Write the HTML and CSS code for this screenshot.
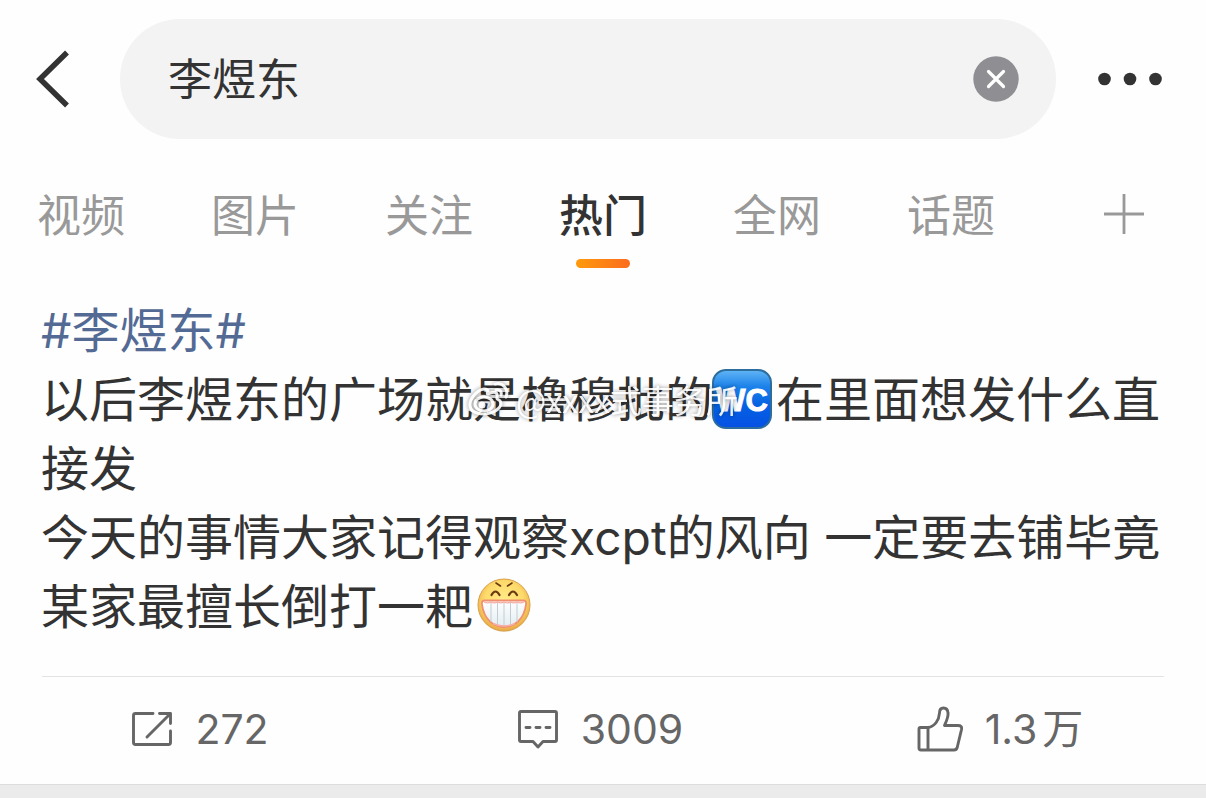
FILE: index.html
```
<!DOCTYPE html>
<html lang="zh-CN">
<head>
    <meta charset="UTF-8">
    <meta name="viewport" content="width=device-width, initial-scale=1.0">
    <title>李煜东 - 搜索</title>
    <link rel="stylesheet" href="styles.css">
</head>
<body>
    <header class="topbar">
        <button class="back" type="button" aria-label="返回">
            <svg width="34" height="58" viewBox="0 0 34 58"><path d="M31 2.5 4 29l27 26.5" fill="none" stroke="#333" stroke-width="5.5"/></svg>
        </button>
        <form class="search" role="search">
            <input class="search-input" type="text" aria-label="搜索" value="李煜东">
            <button class="clear" type="button" aria-label="清除">
                <svg width="46" height="46" viewBox="0 0 46 46"><circle cx="23" cy="23" r="22.7" fill="#8e8e93"/><path d="m15.5 15.5 15 15m0-15-15 15" stroke="#fff" stroke-width="3.2" stroke-linecap="round"/></svg>
            </button>
        </form>
        <button class="more" type="button" aria-label="更多">
            <svg width="64" height="14" viewBox="0 0 64 14" fill="#333"><circle cx="6.5" cy="7" r="6.3"/><circle cx="32" cy="7" r="6.3"/><circle cx="57.5" cy="7" r="6.3"/></svg>
        </button>
    </header>

    <nav class="tabs">
        <a class="tab" href="#">视频</a>
        <a class="tab" href="#">图片</a>
        <a class="tab" href="#">关注</a>
        <a class="tab active" href="#">热门</a>
        <a class="tab" href="#">全网</a>
        <a class="tab" href="#">话题</a>
        <button class="add" type="button" aria-label="添加">
            <svg width="40" height="40" viewBox="0 0 40 40"><path d="M20 0v40M0 20h40" stroke="#999" stroke-width="2.8"/></svg>
        </button>
    </nav>

    <article class="post">
        <div class="content">
            <p><a class="topic" href="#">#李煜东#</a></p>
            <p>以后李煜东的广场就是橹穆批的<svg class="emoji wc" viewBox="0 0 60 60" role="img" aria-label="WC">
                <defs>
                    <linearGradient id="wcFill" x1="0" y1="0" x2="0" y2="1"><stop offset="0" stop-color="#62b5f5"/><stop offset=".28" stop-color="#1d83ea"/><stop offset=".6" stop-color="#0562e2"/><stop offset="1" stop-color="#0650e4"/></linearGradient>
                </defs>
                <rect x="1" y="1" width="58" height="58" rx="13" fill="url(#wcFill)" stroke="#2d6d9e" stroke-width="2"/>
                <text class="wc-text" x="30" y="42" text-anchor="middle">WC</text>
            </svg>在里面想发什么直接发</p>
            <p>今天的事情大家记得观察xcpt的风向 一定要去铺毕竟某家最擅长倒打一耙<svg class="emoji grin" viewBox="0 0 56 56" role="img" aria-label="呲牙">
                <defs>
                    <radialGradient id="face" cx=".5" cy=".42" r=".58"><stop offset="0" stop-color="#ffec8a"/><stop offset=".65" stop-color="#fdda6a"/><stop offset="1" stop-color="#e9a845"/></radialGradient>
                    <linearGradient id="teeth" x1="0" y1="0" x2="0" y2="1"><stop offset="0" stop-color="#fff"/><stop offset="1" stop-color="#e3edf1"/></linearGradient>
                </defs>
                <ellipse cx="28" cy="30" rx="24" ry="25" fill="#d9c7a0" opacity=".5"/>
                <circle cx="28" cy="28" r="26" fill="url(#face)" stroke="#d9a04a" stroke-width="1"/>
                <path d="M20 6l4.500 3M36 6l-4.500 3" stroke="#6b3a12" stroke-width="1.600" stroke-linecap="round"/>
                <path d="M15.500 18q4-7 8 0M33 18q4-7 8 0" fill="none" stroke="#6b3a12" stroke-width="2.200" stroke-linecap="round"/>
                <path d="M8.500 23.500h39q3 0 2.500 4C48 42 39 50 28 50S8 42 6 27.500q-.5-4 2.500-4z" fill="url(#teeth)" stroke="#f08f70" stroke-width="1.800"/>
                <path d="M15 25v20M21.500 25v23M28 25v24M34.500 25v23M41 25v20" stroke="#c3ccd3" stroke-width="1"/>
                <path d="M8 25q3.500 1.800 7 0 3.300 1.800 6.500 0 3.300 1.800 6.500 0 3.300 1.800 6.500 0 3.300 1.800 6.500 0 3.500 1.800 7 0M17 46.500q11 5 22 0" fill="none" stroke="#f6aea6" stroke-width="1.400"/>
            </svg></p>
            <div class="watermark">
                <svg width="42" height="36" viewBox="0 0 42 36" fill="none" stroke="#fff" stroke-width="3" stroke-linecap="round">
                    <path d="M16 8C9 9 1 18 2 25c1 8 13 9 20 7 8-2 13-8 10-12-1-2-4-1-3-4 1-5-3-6-9-3-1 0-1-1 0-3 0-2-2-2-4-2z"/>
                    <ellipse cx="16" cy="23" rx="9" ry="7"/>
                    <circle cx="14" cy="24" r="2" fill="#fff"/>
                    <path d="M27 3c8-2 14 5 11 13M28 9c4-1 6 2 5 5"/>
                </svg>
                <span>@xxxx式事务所</span>
            </div>
        </div>

        <footer class="actions">
            <button class="action" type="button">
                <svg width="42" height="36" viewBox="0 0 42 36" fill="none" stroke="#666" stroke-width="2.900" stroke-linecap="round" stroke-linejoin="round"><path d="M22 2.500H4.500q-2 0-2 2v27q0 2 2 2h33q2 0 2-2V20M28.500 2.500h11v10M39.500 2.500 16 26"/></svg>
                <span>272</span>
            </button>
            <button class="action" type="button">
                <svg width="42" height="40" viewBox="0 0 42 40" fill="none" stroke="#666" stroke-width="2.900" stroke-linecap="round" stroke-linejoin="round"><path d="M4 2.500h34q1.500 0 1.500 1.500v27q0 1.500-1.500 1.500H26l-5 5.500-5-5.500H4Q2.500 32.500 2.500 31V4Q2.500 2.500 4 2.500zM9 18.500h4M19 18.500h4M29 18.500h4"/></svg>
                <span>3009</span>
            </button>
            <button class="action" type="button">
                <svg width="46" height="46" viewBox="0 0 46 46" fill="none" stroke="#666" stroke-width="2.900" stroke-linecap="round" stroke-linejoin="round"><path d="M11 21.500H3.500Q2 21.500 2 23v19q0 2 2 2h33q2.500 0 3.200-2.500l4.300-18q.8-4-3.500-4H27.500c1-2.500 4-8 3.500-12.500C30.700 3.500 29 2 26.500 2S22.500 4 22.500 7C22 14 18 20.500 11 21.500zV44"/></svg>
                <span>1.3<span class="unit">万</span></span>
            </button>
        </footer>
    </article>
</body>
</html>
```
FILE: styles.css
```
* {
    box-sizing: border-box;
}
body {
    margin: 0;
    min-height: 100vh;
    background-color: #ebebeb;
    color: #333;
    font-family: Inter, "Noto Sans CJK SC", sans-serif;
}
button {
    padding: 0;
    border: 0;
    background: none;
    color: inherit;
    font: inherit;
    cursor: pointer;
}
svg {
    display: block;
    flex: none;
}
a {
    color: inherit;
    text-decoration: none;
}
.topbar {
    display: flex;
    align-items: center;
    padding: 19px 44px 19px 36px;
    background-color: #fefefe;
}
.search {
    display: flex;
    flex: 1;
    align-items: center;
    height: 120px;
    margin: 0 42px 0 50px;
    padding: 0 37px 0 48px;
    border-radius: 60px;
    background-color: #f3f3f3;
}
.search-input {
    flex: 1;
    min-width: 0;
    padding: 2px 0 0;
    border: 0;
    outline: 0;
    background: none;
    color: #333;
    font: inherit;
    font-size: 44px;
    line-height: 64px;
}
.tabs {
    display: flex;
    align-items: flex-start;
    gap: 86px;
    padding: 26px 62px 24px 37px;
    background-color: #fefefe;
    color: #999;
    font-size: 44px;
    line-height: 64px;
}
.tab {
    display: flex;
    flex-direction: column;
    align-items: center;
    white-space: nowrap;
}
.tab::after {
    content: "";
    width: 54px;
    height: 9px;
    margin-top: 11px;
    border-radius: 5px;
}
.tab.active {
    color: #333;
    font-weight: 500;
}
.tab.active::after {
    background: linear-gradient(to right, #ff9a0c, #fb6c1e);
}
.add {
    margin: 10px 0 0 auto;
}
.post {
    background-color: #fefefe;
    border-bottom: 1px solid #ddd;
}
.content {
    position: relative;
    padding: 4px 36px 35px 41px;
    font-size: 48px;
    line-height: 69px;
}
.content p {
    margin: 0;
}
.topic {
    color: #536a94;
}
.emoji {
    display: inline-block;
    vertical-align: middle;
}
.wc {
    width: 60px;
    height: 60px;
    margin: -10px 4px 0 -1px;
}
.grin {
    width: 56px;
    height: 56px;
    margin: -12px 0 0 3px;
}
.wc-text {
    fill: #fff;
    stroke: #fff;
    stroke-width: 1px;
    font-family: "Liberation Sans", sans-serif;
    font-size: 31px;
    font-weight: 700;
}
/* author mark laid over the post text */
.watermark {
    position: absolute;
    top: 87px;
    left: 468px;
    display: flex;
    align-items: center;
    gap: 6px;
    color: #fff;
    font-family: "Noto Sans CJK SC", sans-serif;
    font-size: 32px;
    line-height: 40px;
    white-space: nowrap;
    opacity: 0.9;
    filter: drop-shadow(0 0 2px rgba(0, 0, 0, 0.5));
    pointer-events: none;
}
.actions {
    display: grid;
    grid-template-columns: repeat(3, 1fr);
    padding: 0 6px 4px 0;
}
.actions::before {
    content: "";
    grid-column: 1 / -1;
    height: 1px;
    margin: 0 36px 0 42px;
    background-color: #e3e3e3;
}
.action {
    display: flex;
    align-items: center;
    justify-content: center;
    gap: 22px;
    height: 103px;
    color: #666;
    font-size: 41px;
    line-height: 60px;
    white-space: nowrap;
}
.unit {
    margin-left: 5px;
}
```
